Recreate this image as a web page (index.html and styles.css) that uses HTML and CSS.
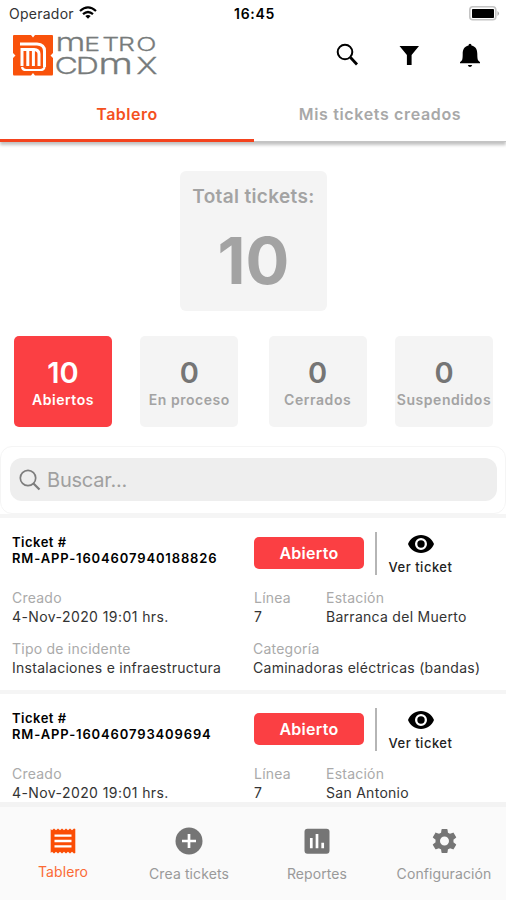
FILE: index.html
```html
<!DOCTYPE html>
<html lang="es">
<head>
<meta charset="utf-8">
<title>Metro CDMX</title>
<link rel="stylesheet" href="styles.css">
</head>
<body>
<div class="app">
  <div class="status">
    <div class="carrier"><span>Operador</span>
      <svg width="18" height="13" viewBox="0 0 18 13" fill="none" stroke="#000" stroke-width="2.2"><path d="M1 5Q9-2.4 17 5M4 8.2Q9 3.8 14 8.2"/><path d="M9 12.8 6.3 10.1Q9 8 11.7 10.1Z" fill="#000" stroke="none"/></svg>
    </div>
    <div class="clock">16:45</div>
    <svg class="battery" width="31" height="15" viewBox="0 0 31 15"><rect x=".8" y=".8" width="26" height="13" rx="3" fill="#fff" stroke="#c4c4c4" stroke-width="1.6"/><rect x="3" y="3" width="22" height="9" rx=".8"/><path d="M28.5 5q3 2.5 0 5z" fill="#aaa"/></svg>
  </div>
  <header class="header">
    <svg class="logo" width="150" height="46" viewBox="0 0 150 46">
      <path fill="#f9520b" d="M2 1H19L21 3.500 23 1H40Q41 1 41 2V19L38.500 21.500 41 24V40Q41 41.500 40 41.500H23L21 39 19 41.500H2Q1 41.500 1 40V24L3.500 21.500 1 19V2Q1 1 2 1Z"/>
      <g fill="none" stroke="#fff"><path stroke-width="3" d="M8 10H25Q32.500 10.500 32.500 17V33"/><path stroke-width="3" d="M10 32V15.500H22Q27 16 27 20V32M15.800 16V32M21.400 17V32"/><path stroke-width="2.200" d="M10 33Q10.500 36 14 36H28Q32 36 32.500 33"/></g>
      <g class="wordmark"><text transform="translate(0 17) scale(1.4 1)"><tspan class="uni" x="31">m</tspan><tspan class="caps" x="51.700 64.400 75.700 88.700">ETRO</tspan></text><text transform="translate(0 40) scale(1.4 1)"><tspan class="caps2" x="30.300 45.500">CD</tspan><tspan class="uni2" x="61.700">m</tspan><tspan class="caps2" x="88.800">X</tspan></text></g>
    </svg>
    <div class="actions">
      <svg width="24" height="24" viewBox="0 0 24 24" fill="none" stroke="#000"><circle cx="10" cy="9" r="7.300" stroke-width="2"/><path d="M15.500 14.500 22 21.500" stroke-width="2.800"/></svg>
      <svg width="24" height="24" viewBox="0 0 24 24"><path d="M2.500 3H22L14.600 12V22H9.900V12Z"/></svg>
      <svg width="24" height="24" viewBox="0 0 24 24"><path d="M12 .8Q13.500.8 13.500 2.600C18 3.700 19.300 7 19.300 11Q19.300 16 20 17.200L22 19.200V20.300H2V19.200L4 17.200Q4.700 16 4.700 11C4.700 7 6 3.700 10.500 2.600Q10.500.8 12 .8ZM9.800 22H14.200Q13.500 24 12 24T9.800 22Z"/></svg>
    </div>
  </header>
  <nav class="tabs"><div class="tab active"><span>Tablero</span></div><div class="tab"><span>Mis tickets creados</span></div></nav>
  <main class="main">
    <section class="total"><h2>Total tickets:</h2><strong>10</strong></section>
    <section class="stats">
      <div class="stat open"><b>10</b><span>Abiertos</span></div>
      <div class="stat"><b>0</b><span>En proceso</span></div>
      <div class="stat"><b>0</b><span>Cerrados</span></div>
      <div class="stat"><b>0</b><span>Suspendidos</span></div>
    </section>
    <section class="search"><div class="field"><svg width="22" height="22" viewBox="0 0 22 22" fill="none" stroke="#7d7d7d" stroke-width="1.700"><circle cx="9" cy="9" r="7.700"/><path d="M14.500 14.500 20.500 20.500" stroke-width="2.200"/></svg><span>Buscar...</span></div></section>
    <article class="ticket">
      <div class="top"><div class="id">Ticket #<br><span>RM-APP-1604607940188826</span></div><div class="badge">Abierto</div><div class="view"><svg width="26" height="18" viewBox="0 0 26 18"><path fill-rule="evenodd" d="M13 0C7 0 2.200 3.700 0 9c2.200 5.300 7 9 13 9s10.800-3.700 13-9C23.800 3.700 19 0 13 0Zm0 15a6 6 0 1 1 0-12 6 6 0 0 1 0 12Zm0-2.300a3.700 3.700 0 1 0 0-7.400 3.700 3.700 0 0 0 0 7.400Z"/></svg><span>Ver ticket</span></div></div>
      <dl class="info three"><div><dt>Creado</dt><dd class="date">4-Nov-2020 19:01 hrs.</dd></div><div><dt>Línea</dt><dd>7</dd></div><div><dt>Estación</dt><dd>Barranca del Muerto</dd></div></dl>
      <dl class="info two"><div><dt>Tipo de incidente</dt><dd>Instalaciones e infraestructura</dd></div><div><dt>Categoría</dt><dd>Caminadoras eléctricas (bandas)</dd></div></dl>
    </article>
    <article class="ticket">
      <div class="top"><div class="id">Ticket #<br><span>RM-APP-160460793409694</span></div><div class="badge">Abierto</div><div class="view"><svg width="26" height="18" viewBox="0 0 26 18"><path fill-rule="evenodd" d="M13 0C7 0 2.200 3.700 0 9c2.200 5.300 7 9 13 9s10.800-3.700 13-9C23.800 3.700 19 0 13 0Zm0 15a6 6 0 1 1 0-12 6 6 0 0 1 0 12Zm0-2.300a3.700 3.700 0 1 0 0-7.400 3.700 3.700 0 0 0 0 7.400Z"/></svg><span>Ver ticket</span></div></div>
      <dl class="info three"><div><dt>Creado</dt><dd class="date">4-Nov-2020 19:01 hrs.</dd></div><div><dt>Línea</dt><dd>7</dd></div><div><dt>Estación</dt><dd>San Antonio</dd></div></dl>
    </article>
  </main>
  <nav class="bottom">
    <div class="item on"><svg width="26" height="26" viewBox="0 0 26 26"><path fill="#fb4d05" d="M.7 1 2 2.300 4 .5 6 2.300 8 .5 10 2.300 12 .5 14 2.300 16 .5 18 2.300 20 .5 22 2.300 24 .5 25.300 1V25L24 25.500 22 23.700 20 25.500 18 23.700 16 25.500 14 23.700 12 25.500 10 23.700 8 25.500 6 23.700 4 25.500 2 23.700.7 25Z"/><path stroke="#fff" stroke-width="2.300" d="M4.500 7.700H21.500M4.500 13H21.500M4.500 18.400H21.500"/></svg><span>Tablero</span></div>
    <div class="item"><svg width="28" height="28" viewBox="0 0 28 28"><circle cx="14" cy="14" r="13.500" fill="#757575"/><path stroke="#fff" stroke-width="2.700" d="M7 14H21M14 7V21"/></svg><span>Crea tickets</span></div>
    <div class="item"><svg width="26" height="26" viewBox="0 0 26 26"><rect x=".5" y=".7" width="25" height="25" rx="3" fill="#757575"/><path stroke="#fff" stroke-width="2.700" d="M7.300 10V20.300M13 6V20.300M18.700 14.700V20.300"/></svg><span>Reportes</span></div>
    <div class="item"><svg width="31" height="31" viewBox="0 0 24 24"><path fill="#757575" d="M19.140 12.940c.040-.300.060-.610.060-.940 0-.320-.020-.640-.070-.940l2.030-1.580a.49.49 0 0 0 .120-.610l-1.920-3.320a.488.488 0 0 0-.590-.220l-2.390.960c-.500-.380-1.030-.700-1.620-.940l-.360-2.540a.484.484 0 0 0-.480-.410h-3.840c-.240 0-.430.170-.470.410l-.360 2.540c-.590.240-1.130.570-1.620.940l-2.390-.960c-.220-.080-.470 0-.590.220L2.740 8.870c-.120.210-.080.470.120.610l2.030 1.580c-.050.300-.090.630-.090.940s.020.640.070.940l-2.030 1.580a.49.49 0 0 0-.120.610l1.920 3.320c.120.220.370.290.590.220l2.390-.960c.500.380 1.030.700 1.620.940l.360 2.540c.050.240.240.410.480.410h3.840c.240 0 .440-.170.470-.410l.360-2.540c.590-.240 1.130-.560 1.620-.940l2.390.960c.220.080.470 0 .590-.220l1.920-3.320c.120-.220.070-.470-.120-.610l-2.010-1.580zM12 15.600a3.600 3.600 0 1 1 0-7.200 3.600 3.600 0 0 1 0 7.200z"/></svg><span>Configuración</span></div>
  </nav>
</div>
</body>
</html>
```
FILE: styles.css
```css
* { box-sizing: border-box; }
body { margin: 0; background: #fff; font-family: Inter, "Liberation Sans", sans-serif; }
svg { display: block; flex: none; }
.app { width: 506px; height: 900px; display: flex; flex-direction: column; overflow: hidden; background: #fff; }
.status { flex: none; display: grid; grid-template-columns: 1fr auto 1fr; height: 27px; padding: 0 6px 0 9px; align-items: center; }
.carrier { display: flex; align-items: center; gap: 5px; font-size: 14px; letter-spacing: .25px; color: #333; }
.carrier svg { margin-top: -3px; }
.clock { font-size: 14px; font-weight: 600; letter-spacing: .7px; }
.battery { justify-self: end; margin-top: -1px; }
.header { flex: none; height: 61px; padding: 7px 24px 0 12px; display: flex; justify-content: space-between; }
.logo { overflow: visible; }
.wordmark { fill: #777b7b; font-weight: 300; stroke: #777b7b; stroke-width: .25px; }
.uni { font-size: 24.500px; }
.caps { font-size: 19px; }
.uni2 { font-size: 28.500px; }
.caps2 { font-size: 23px; }
.actions { display: flex; gap: 37.500px; padding-top: 9px; }
.tabs { flex: none; height: 54px; display: grid; grid-template-columns: 254px 252px; box-shadow: 0 3px 3px #c2c2c2; background: #fff; z-index: 1; }
.tab { padding-top: 15px; line-height: 22px; text-align: center; font-size: 16px; font-weight: 600; color: #a8a8a8; letter-spacing: .65px; border-bottom: 1px solid #c4c4c4; }
.tab.active { color: #f4511e; letter-spacing: .5px; border-bottom: 3px solid #f4431e; }
.main { flex: 1; min-height: 0; overflow: hidden; display: flex; flex-direction: column; }
.total { flex: none; width: 147px; height: 140px; margin: 29px 0 0 180px; border-radius: 6px; background: #f4f4f4; color: #a3a3a3; display: flex; flex-direction: column; align-items: center; }
.total h2 { margin: 13px 0 0; line-height: 26px; font-size: 19px; font-weight: 600; letter-spacing: .35px; }
.total strong { line-height: 76px; margin-top: 13px; font-size: 65px; font-weight: 700; }
.stats { flex: none; display: flex; justify-content: space-between; margin: 25px 13px 0 14px; }
.stat { width: 98px; height: 91px; padding-top: 21px; border-radius: 5px; background: #f4f4f4; display: flex; flex-direction: column; align-items: center; color: #a3a3a3; }
.stat:nth-child(3) { margin-left: 2px; }
.stat b { font-size: 29px; line-height: 32px; font-weight: 600; color: #757575; }
.stat span { font-size: 14px; line-height: 22px; font-weight: 600; letter-spacing: .55px; white-space: nowrap; }
.stat.open, .stat.open b { background: #fb3f43; color: #fff; }
.search { flex: none; height: 68px; margin-top: 19px; padding: 11px 8px 11px 9px; border: 1px solid #f5f5f5; border-radius: 12px; }
.field { height: 43px; background: #eee; border-radius: 12px; padding: 0 9px; display: flex; align-items: center; gap: 6px; color: #a0a0a0; font-size: 20px; letter-spacing: -.2px; }
.ticket { flex: none; height: 176px; border-top: 4px solid #f5f5f5; padding: 14px 12px 0; }
.top { display: grid; grid-template-columns: 242px 110px 100px; height: 56px; }
.id { padding-top: 2px; font-size: 13px; line-height: 16px; font-weight: 600; letter-spacing: .5px; }
.id span { letter-spacing: .87px; }
.badge { height: 32px; margin-top: 5px; border-radius: 5px; background: #fb3f43; color: #fff; text-align: center; line-height: 32px; font-size: 16px; font-weight: 600; letter-spacing: .3px; }
.view { margin-left: 11px; height: 43px; border-left: 2px solid #b5b5b5; display: flex; flex-direction: column; align-items: center; padding-top: 3px; font-size: 13px; line-height: 20px; font-weight: 500; letter-spacing: .5px; color: #222; white-space: nowrap; }
.view span { margin-top: 4px; }
.info { display: grid; margin: 0 0 13px; font-size: 14px; line-height: 19px; }
.three { grid-template-columns: 242px 72px 1fr; }
.two { grid-template-columns: 241px 1fr; }
.info dt { color: #aaa; letter-spacing: .23px; }
.info dd { margin: 0; color: #333; letter-spacing: .28px; white-space: nowrap; }
.info .date { letter-spacing: .42px; }
.bottom { flex: none; height: 98px; border-top: 5px solid #f3f3f3; background: #fafafa; display: grid; grid-template-columns: 126px 126px 130px 124px; }
.item { display: flex; flex-direction: column; align-items: center; padding-top: 19px; font-size: 14px; letter-spacing: .1px; color: #999; }
.item svg { height: 30px; }
.item span { margin-top: 8px; line-height: 20px; }
.item.on span { color: #fb6a35; margin-top: 6px; }
```
